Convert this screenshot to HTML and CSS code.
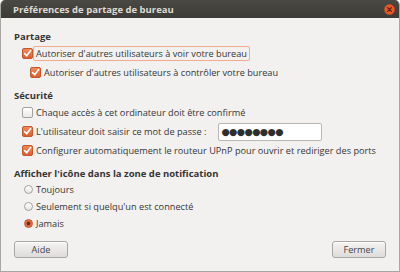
FILE: index.html
```html
<!DOCTYPE html>
<html lang="fr">
<head>
<meta charset="utf-8">
<link rel="stylesheet" href="styles.css">
</head>
<body>
<div class="window">
  <div class="titlebar">
    <span class="title">Préférences de partage de bureau</span>
    <span class="close"><svg width="11" height="11" viewBox="0 0 11 11"><circle cx="5.5" cy="5.5" r="5.2" fill="#e8582a" stroke="#b8441e" stroke-width="0.6"/><path d="M3.6 3.6 L7.4 7.4 M7.4 3.6 L3.6 7.4" stroke="#4a2414" stroke-width="1.3" stroke-linecap="round"/></svg></span>
  </div>
  <div class="content">
    <div class="heading">Partage</div>
    <div class="row">
      <span class="cb on"></span>
      <span class="label focus">Autoriser d'autres utilisateurs à voir votre bureau</span>
    </div>
    <div class="row indent">
      <span class="cb on"></span>
      <span class="label">Autoriser d'autres utilisateurs à contrôler votre bureau</span>
    </div>

    <div class="heading sec">Sécurité</div>
    <div class="row">
      <span class="cb"></span>
      <span class="label">Chaque accès à cet ordinateur doit être confirmé</span>
    </div>
    <div class="row">
      <span class="cb on"></span>
      <span class="label">L'utilisateur doit saisir ce mot de passe :</span>
      <span class="entry">●●●●●●●●</span>
    </div>
    <div class="row">
      <span class="cb on"></span>
      <span class="label">Configurer automatiquement le routeur UPnP pour ouvrir et rediriger des ports</span>
    </div>

    <div class="heading sec">Afficher l'icône dans la zone de notification</div>
    <div class="row radio-row">
      <span class="radio"></span>
      <span class="label">Toujours</span>
    </div>
    <div class="row radio-row">
      <span class="radio"></span>
      <span class="label">Seulement si quelqu'un est connecté</span>
    </div>
    <div class="row radio-row">
      <span class="radio on"></span>
      <span class="label">Jamais</span>
    </div>

    <div class="buttons">
      <button class="btn">Aide</button>
      <button class="btn">Fermer</button>
    </div>
  </div>
</div>
</body>
</html>
```
FILE: styles.css
```css
* { box-sizing: border-box; }
html, body { margin: 0; padding: 0; background: #ffffff; }
body {
  width: 400px;
  height: 272px;
  font-family: "Open Sans", "DejaVu Sans", sans-serif;
  font-size: 9.2px;
  color: #353535;
}
.window {
  width: 400px;
  height: 272px;
  display: flex;
  flex-direction: column;
  border-radius: 5px 5px 0 0;
  overflow: hidden;
  background: #f2f1f0;
  border: 1px solid #a9a7a4;
  border-top: none;
}
.titlebar {
  height: 18px;
  flex: none;
  background: linear-gradient(#4a4944, #3c3b37);
  display: flex;
  align-items: center;
  justify-content: space-between;
  padding: 0 5px 0 13px;
  margin: 0 -1px;
}
.title {
  color: #dfdbd2;
  font-weight: bold;
  font-size: 9.5px;
}
.close { display: flex; margin-top: 1px; }
.content {
  flex: 1;
  display: flex;
  flex-direction: column;
  padding: 12px 12px 0 13px;
}
.heading {
  font-weight: bold;
  height: 14px;
  line-height: 14px;
  font-size: 9.5px;
}
.heading.sec { margin-top: 7px; }
.row {
  height: 19px;
  display: flex;
  align-items: center;
  padding-left: 8px;
}
.row.indent { padding-left: 16px; }
.radio-row { height: 17px; padding-left: 10px; }
.cb {
  width: 11px;
  height: 11px;
  flex: none;
  border-radius: 2px;
  border: 1px solid #a3a19d;
  background: linear-gradient(#ffffff, #e9e8e6);
}
.cb.on {
  border-color: #c4572b;
  background-color: #ea7444;
  background-image: url("data:image/svg+xml;utf8,<svg xmlns='http://www.w3.org/2000/svg' width='9' height='9' viewBox='0 0 9 9'><path d='M1.6 4.6 L3.7 6.8 L7.6 1.6' fill='none' stroke='%23ffffff' stroke-width='1.6' stroke-linecap='round' stroke-linejoin='round'/></svg>"), linear-gradient(#f08a5c, #dd5f2d);
  background-repeat: no-repeat;
  background-position: center;
}
.radio {
  width: 9px;
  height: 9px;
  flex: none;
  border-radius: 50%;
  border: 1px solid #a3a19d;
  background: linear-gradient(#ffffff, #e6e5e3);
}
.radio.on {
  border-color: #c4572b;
  background: radial-gradient(circle, #6b2a14 0 1.6px, #e46a3a 2.2px);
}
.label {
  line-height: 13px;
  padding: 0 2px 0 2px;
  border: 1px solid transparent;
  border-radius: 2px;
  white-space: nowrap;
}
.label.focus {
  border-color: #f2ab8f;
}
.entry {
  margin-left: 9px;
  width: 104px;
  height: 18px;
  border: 1px solid #b9b7b3;
  border-radius: 2px;
  background: #ffffff;
  font-size: 9.5px;
  letter-spacing: -0.6px;
  line-height: 16px;
  padding-left: 2px;
  color: #2e2e2e;
}
.buttons {
  display: flex;
  justify-content: space-between;
  margin-top: auto;
  margin-bottom: 13px;
  padding-right: 1px;
}
.btn {
  width: 54px;
  height: 17px;
  font-family: inherit;
  font-size: 9.2px;
  color: #454545;
  border: 1px solid #a9a7a4;
  border-radius: 3px;
  background: linear-gradient(#f5f4f3, #dedcda);
  padding: 0;
  box-shadow: inset 0 1px 0 #ffffff;
}
```
